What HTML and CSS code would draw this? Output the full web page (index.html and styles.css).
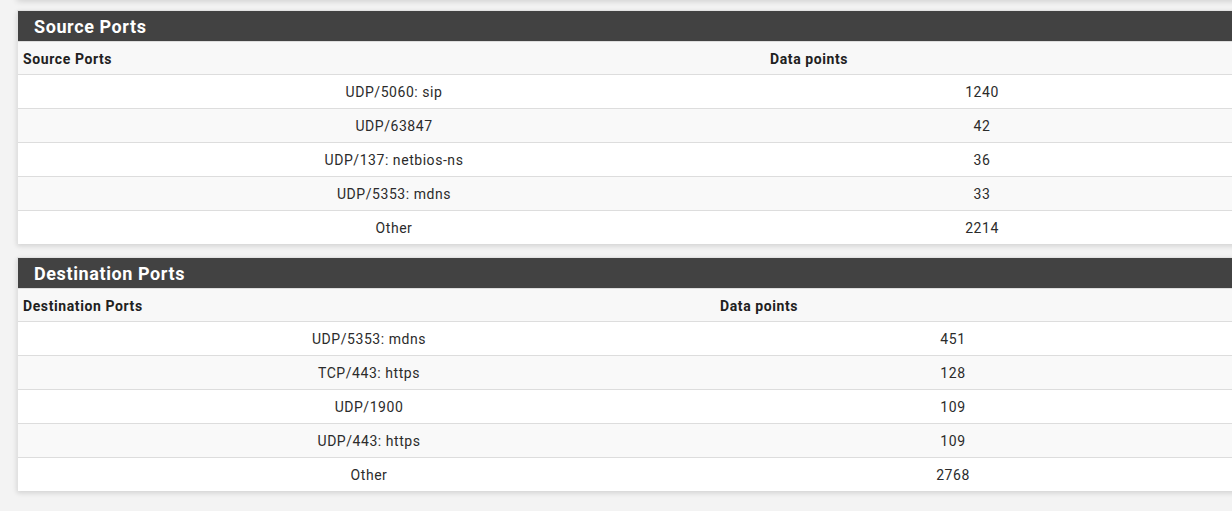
FILE: index.html
```html
<!DOCTYPE html>
<html>
<head>
<meta charset="utf-8">
<link rel="stylesheet" href="styles.css">
</head>
<body>
<div class="prev-panel"></div>
<div class="panel">
  <div class="panel-heading"><h2 class="panel-title">Source Ports</h2></div>
  <table class="tbl tbl-src">
    <colgroup><col class="c1"><col class="c2"><col class="c3"></colgroup>
    <thead><tr><th>Source Ports</th><th>Data points</th><th></th></tr></thead>
    <tbody>
      <tr><td class="ctr">UDP/5060: sip</td><td class="ctr">1240</td><td></td></tr>
      <tr><td class="ctr">UDP/63847</td><td class="ctr">42</td><td></td></tr>
      <tr><td class="ctr">UDP/137: netbios-ns</td><td class="ctr">36</td><td></td></tr>
      <tr><td class="ctr">UDP/5353: mdns</td><td class="ctr">33</td><td></td></tr>
      <tr><td class="ctr">Other</td><td class="ctr">2214</td><td></td></tr>
    </tbody>
  </table>
</div>
<div class="panel">
  <div class="panel-heading"><h2 class="panel-title">Destination Ports</h2></div>
  <table class="tbl tbl-dst">
    <colgroup><col class="c1"><col class="c2"><col class="c3"></colgroup>
    <thead><tr><th>Destination Ports</th><th>Data points</th><th></th></tr></thead>
    <tbody>
      <tr><td class="ctr">UDP/5353: mdns</td><td class="ctr">451</td><td></td></tr>
      <tr><td class="ctr">TCP/443: https</td><td class="ctr">128</td><td></td></tr>
      <tr><td class="ctr">UDP/1900</td><td class="ctr">109</td><td></td></tr>
      <tr><td class="ctr">UDP/443: https</td><td class="ctr">109</td><td></td></tr>
      <tr><td class="ctr">Other</td><td class="ctr">2768</td><td></td></tr>
    </tbody>
  </table>
</div>
</body>
</html>
```
FILE: styles.css
```css
html, body {
  margin: 0;
  padding: 0;
  overflow: hidden;
}
body {
  background: #f3f3f3;
  font-family: Roboto, "Liberation Sans", sans-serif;
  font-size: 14px;
  color: #212121;
  width: 1232px;
  height: 511px;
}
.prev-panel {
  height: 20px;
  margin-top: -20px;
  margin-left: 17px;
  width: 1300px;
  background: #fff;
  box-shadow: 0 1px 6px rgba(0, 0, 0, 0.16);
}
.panel {
  margin: 10px 0 13px 17px;
  width: 1300px;
  background: #fff;
  border: 1px solid #e2e2e2;
  border-bottom: 0;
  box-shadow: 0 2px 5px rgba(0, 0, 0, 0.14);
}
.panel + .panel {
  margin-top: 0;
}
.panel-heading {
  background: #424242;
  height: 30px;
  border-bottom: 1px solid #dddddd;
  display: flex;
  align-items: center;
  padding-left: 16px;
}
.panel-title {
  margin: 2px 0 0;
  color: #fff;
  font-size: 18px;
  font-weight: 700;
  line-height: 20px;
  letter-spacing: 0.6px;
}
.tbl {
  border-collapse: collapse;
  table-layout: fixed;
  width: 100%;
  letter-spacing: 0.55px;
}
.tbl-src .c1 { width: 747px; }
.tbl-src .c2 { width: 434px; }
.tbl-dst .c1 { width: 697px; }
.tbl-dst .c2 { width: 476px; }
.tbl th {
  background: #f8f8f8;
  text-align: left;
  font-weight: 700;
  height: 30px;
  padding: 2px 5px 0;
  border-bottom: 1px solid #dddddd;
  color: #212121;
  letter-spacing: 0.6px;
}
.tbl td {
  height: 33px;
  padding: 0 5px;
  border-top: 1px solid #dddddd;
  color: #2b2b2b;
}
.tbl td:first-child {
  padding-left: 10px;
}
.tbl thead + tbody tr:first-child td {
  border-top: 0;
}
.tbl tbody tr:nth-child(even) td {
  background: #f9f9f9;
}
.tbl td.ctr {
  text-align: center;
}
```
